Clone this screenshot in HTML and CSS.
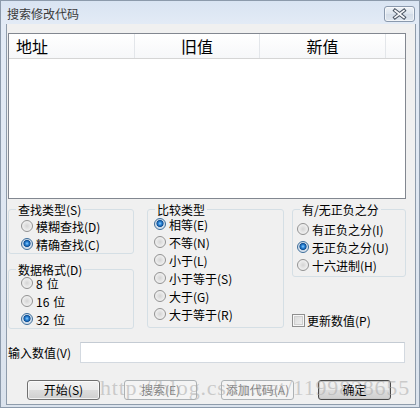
FILE: index.html
```html
<!DOCTYPE html>
<html lang="zh-CN">
<head>
<meta charset="utf-8">
<title>搜索修改代码</title>
<link rel="stylesheet" href="styles.css">
</head>
<body>
<div class="window">
  <div class="titlebar">
    <span class="title">搜索修改代码</span>
    <span class="close">
      <svg width="29" height="14" viewBox="0 0 29 14">
        <path d="M10 3.5 L19 10.5 M19 3.5 L10 10.5" stroke="#4b5563" stroke-width="3.6" stroke-linecap="square" fill="none"/>
        <path d="M10 3.5 L19 10.5 M19 3.5 L10 10.5" stroke="#f7f8fa" stroke-width="1.6" stroke-linecap="square" fill="none"/>
      </svg>
    </span>
  </div>
  <div class="client">
    <div class="listview">
      <div class="lv-head">
        <div class="lv-col c1">地址</div>
        <div class="lv-col c2">旧值</div>
        <div class="lv-col c3">新值</div>
        <div class="lv-col c4"></div>
      </div>
    </div>

    <div class="groups">
      <div class="col col-a">
        <div class="group g-find">
          <span class="gtitle">查找类型(S)</span>
          <label class="opt"><span class="radio"></span>模糊查找(D)</label>
          <label class="opt"><span class="radio on"></span>精确查找(C)</label>
        </div>
        <div class="group g-fmt">
          <span class="gtitle">数据格式(D)</span>
          <label class="opt"><span class="radio"></span><span class="num">8</span>位</label>
          <label class="opt"><span class="radio"></span><span class="num">16</span>位</label>
          <label class="opt"><span class="radio on"></span><span class="num">32</span>位</label>
        </div>
      </div>
      <div class="col col-b">
        <div class="group g-cmp">
          <span class="gtitle">比较类型</span>
          <label class="opt"><span class="radio on"></span>相等(E)</label>
          <label class="opt"><span class="radio"></span>不等(N)</label>
          <label class="opt"><span class="radio"></span>小于(L)</label>
          <label class="opt"><span class="radio"></span>小于等于(S)</label>
          <label class="opt"><span class="radio"></span>大于(G)</label>
          <label class="opt"><span class="radio"></span>大于等于(R)</label>
        </div>
      </div>
      <div class="col col-c">
        <div class="group g-sign">
          <span class="gtitle">有/无正负之分</span>
          <label class="opt"><span class="radio"></span>有正负之分(I)</label>
          <label class="opt"><span class="radio on"></span>无正负之分(U)</label>
          <label class="opt"><span class="radio"></span>十六进制(H)</label>
        </div>
        <label class="opt check-row"><span class="check"></span>更新数值(P)</label>
      </div>
    </div>

    <div class="input-row">
      <span class="input-label">输入数值(V)</span>
      <span class="input"></span>
    </div>

    <div class="buttons">
      <span class="btn">开始(S)</span>
      <span class="btn disabled">搜索(E)</span>
      <span class="btn disabled">添加代码(A)</span>
      <span class="btn default">确定</span>
    </div>
  </div>
  <div class="watermark">http://blog.csdn.net/1199828655</div>
</div>
</body>
</html>
```

FILE: styles.css
```css
* {
  box-sizing: border-box;
}

html, body {
  margin: 0;
  padding: 0;
  background: #ffffff;
}

body {
  font-family: "Noto Sans CJK SC", "Noto Sans", sans-serif;
  font-size: 12px;
  color: #000;
}

.window {
  position: relative;
  width: 420px;
  height: 408px;
  border: 1px solid #8c9aab;
  padding: 0 3px 2px 5px;
  background: linear-gradient(#d9e4f2 0, #e3ebf6 24px, #dbe3ed 100%);
  display: flex;
  flex-direction: column;
  overflow: hidden;
}

.titlebar {
  height: 23px;
  display: flex;
  align-items: flex-start;
  justify-content: space-between;
  flex: none;
}

.title {
  padding-left: 1px;
  line-height: 23px;
  padding-top: 1px;
  font-size: 12px;
  color: #3a3a3a;
}

.close {
  margin-top: 5px;
  margin-right: 1px;
  width: 31px;
  height: 16px;
  border: 1px solid #8a99ad;
  border-radius: 3px;
  background: linear-gradient(#eef2f7, #dde5ee 50%, #d3dce7 51%, #dfe6ef);
  box-shadow: inset 0 0 0 1px rgba(255, 255, 255, 0.6);
  display: flex;
  align-items: center;
  justify-content: center;
}

.close svg {
  display: block;
}

.client {
  flex: none;
  height: 381px;
  background: #f0f0f0;
  border-left: 1px solid #8f9cab;
  border-right: 1px solid #8f9cab;
  border-bottom: 1px solid #8f9cab;
  display: flex;
  flex-direction: column;
}

/* list view */
.listview {
  margin: 9px 0 0 1px;
  width: 398px;
  height: 166px;
  border: 1px solid #828790;
  background: #ffffff;
  flex: none;
}

.lv-head {
  display: flex;
  height: 25px;
  border-bottom: 1px solid #d5d5d5;
  background: linear-gradient(#ffffff, #f6f7f9);
}

.lv-col {
  height: 24px;
  line-height: 24px;
  font-size: 16px;
  border-right: 1px solid #e3e6ea;
}

.c1 {
  width: 126px;
  padding-left: 7px;
}

.c2 {
  width: 125px;
  text-align: center;
}

.c3 {
  width: 126px;
  text-align: center;
}

.c4 {
  flex: 1;
  border-right: none;
}

/* group boxes */
.groups {
  margin: 10px 0 0 1px;
  height: 120px;
  display: flex;
  align-items: flex-start;
  flex: none;
}

.col {
  display: flex;
  flex-direction: column;
}

.col-a {
  width: 126px;
}

.col-b {
  width: 137px;
  margin-left: 13px;
}

.col-c {
  width: 114px;
  margin-left: 8px;
}

.group {
  position: relative;
  border: 1px solid #d5dfe5;
  border-radius: 3px;
  display: flex;
  flex-direction: column;
}

.gtitle {
  position: absolute;
  top: -7px;
  left: 7px;
  padding: 0 2px;
  line-height: 13px;
  background: #f0f0f0;
  white-space: nowrap;
}

.g-find {
  height: 45px;
  padding: 7px 0 0 12px;
}

.g-fmt {
  margin-top: 15px;
  height: 60px;
  padding: 4px 0 0 12px;
}

.g-cmp {
  height: 119px;
  padding: 5px 0 0 6px;
}

.g-sign {
  height: 68px;
  padding: 10px 0 0 4px;
}

.opt {
  display: flex;
  align-items: center;
  height: 18px;
  white-space: nowrap;
}

.radio {
  width: 12px;
  height: 12px;
  margin-right: 3px;
  border-radius: 50%;
  border: 1px solid #929292;
  background: radial-gradient(circle at 50% 50%, #d4d4d4 0, #e6e6e6 3px, #f6f6f6 6px);
  flex: none;
}

.radio.on {
  border-color: #3c6d9a;
  background: radial-gradient(circle at 50% 45%, #8fd0ff 0, #2d86d8 1.6px, #0f4f94 3.2px, #c7d6e6 3.9px, #eef2f6 6px);
}

.num {
  margin-right: 4px;
}

.check-row {
  margin-top: 34px;
}

.check {
  width: 13px;
  height: 13px;
  margin-right: 2px;
  border: 1px solid #8f8f8f;
  background: linear-gradient(135deg, #d6d6d6, #f4f4f4);
  box-shadow: inset 0 0 0 1px #f7f7f7, inset 0 0 0 2px #cfcfcf;
  flex: none;
}

/* input row */
.input-row {
  margin: 13px 0 0 1px;
  display: flex;
  align-items: center;
  height: 21px;
  flex: none;
}

.input-label {
  width: 72px;
}

.input {
  width: 325px;
  height: 21px;
  background: #ffffff;
  border: 1px solid #d3d9e0;
  border-top-color: #c4cbd3;
}

/* buttons */
.buttons {
  margin: 17px 0 0 20px;
  display: flex;
  gap: 24px;
  flex: none;
}

.btn {
  width: 73px;
  height: 20px;
  line-height: 18px;
  text-align: center;
  border: 1px solid #707070;
  border-radius: 3px;
  background: linear-gradient(#f2f2f2 0, #ebebeb 50%, #dddddd 51%, #cfcfcf 100%);
  box-shadow: inset 0 0 0 1px rgba(255, 255, 255, 0.7);
  color: #000;
}

.btn.disabled {
  border-color: #adb2b5;
  background: #f4f4f4;
  box-shadow: none;
  color: #838383;
}

.btn.default {
  border-color: #4a4a4a;
  box-shadow: inset 0 0 0 1px #c9c9c9;
}

.watermark {
  position: absolute;
  left: 99px;
  top: 376px;
  font-family: "Liberation Serif", serif;
  font-size: 22px;
  line-height: 22px;
  letter-spacing: 0.8px;
  color: rgba(170, 170, 170, 0.55);
  white-space: nowrap;
  pointer-events: none;
}
```
